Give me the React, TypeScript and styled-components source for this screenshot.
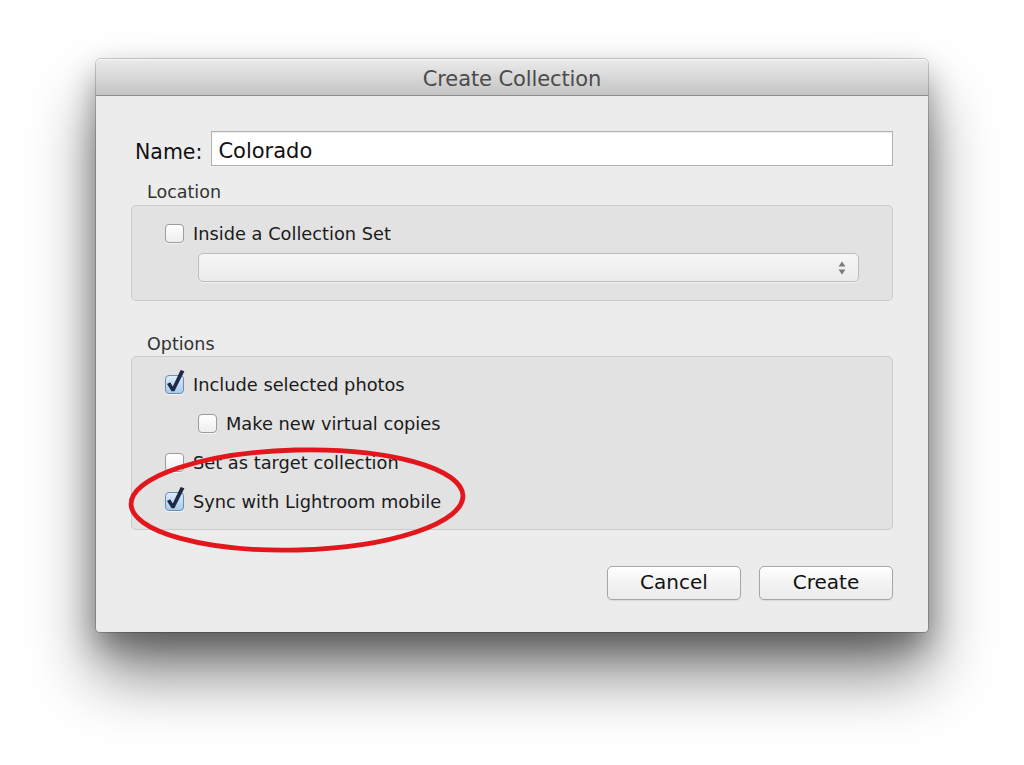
import React from "react";
import styled, { createGlobalStyle, css } from "styled-components";

const GlobalStyle = createGlobalStyle`
  html, body {
    margin: 0;
    padding: 0;
    background: #ffffff;
  }
  body {
    font-family: "DejaVu Sans", "Liberation Sans", sans-serif;
    color: #1a1a1a;
  }
`;

const Page = styled.div`
  width: 1024px;
  height: 765px;
  box-sizing: border-box;
  padding: 59px 0 0 96px;
  background: #ffffff;
  overflow: hidden;
`;

const Dialog = styled.div`
  position: relative;
  width: 832px;
  background: #ececec;
  border-radius: 5px 5px 4px 4px;
  box-shadow: 0 0 0 1px rgba(0, 0, 0, 0.18), 0 14px 30px rgba(0, 0, 0, 0.32),
    0 42px 64px rgba(0, 0, 0, 0.5);
`;

const TitleBar = styled.div`
  height: 37px;
  box-sizing: border-box;
  padding-top: 3px;
  display: flex;
  align-items: center;
  justify-content: center;
  border-radius: 5px 5px 0 0;
  border-bottom: 1px solid #8e8e8e;
  background: linear-gradient(#ebebeb, #d6d6d6 55%, #c4c4c4);
  box-shadow: inset 0 1px 0 #f7f7f7;
  font-size: 21px;
  color: #4b4b4b;
  letter-spacing: -0.1px;
`;

const Body = styled.div`
  padding: 35px 35px 32px 35px;
  display: flex;
  flex-direction: column;
`;

const NameRow = styled.label`
  display: flex;
  align-items: center;
  gap: 9px;
  padding-left: 4px;
  height: 35px;
  font-size: 20.5px;
  color: #111;
`;

const NameLabel = styled.span`
  padding-top: 6px;
`;

const TextField = styled.input`
  flex: 1;
  height: 35px;
  box-sizing: border-box;
  border: 1px solid #b2b2b2;
  box-shadow: inset 0 1px 1px rgba(0, 0, 0, 0.08);
  background: #ffffff;
  padding: 5px 6px 0;
  font-family: inherit;
  font-size: 21px;
  color: #111;
  outline: none;
`;

const SectionLabel = styled.div<{ $top: number; $bottom: number }>`
  margin: ${(p) => p.$top}px 0 ${(p) => p.$bottom}px 16px;
  height: 22px;
  line-height: 22px;
  font-size: 17.5px;
  color: #333;
`;

const Group = styled.div`
  background: #e2e2e2;
  border: 1px solid #cbcbcb;
  border-radius: 5px;
  padding: 18px 33px;
  display: flex;
  flex-direction: column;
  gap: 20px;
`;

const LocationGroup = styled(Group)`
  gap: 10px;
`;

const Row = styled.div<{ $indent?: boolean }>`
  display: flex;
  align-items: center;
  gap: 9px;
  height: 19px;
  margin-left: ${(p) => (p.$indent ? 33 : 0)}px;
  font-size: 17.8px;
  color: #1a1a1a;
  white-space: nowrap;
`;

const Box = styled.span<{ $checked?: boolean }>`
  position: relative;
  flex: none;
  width: 19px;
  height: 19px;
  box-sizing: border-box;
  border-radius: 4px;
  border: 1px solid #9c9c9c;
  background: linear-gradient(#ffffff, #eeeeee);
  box-shadow: 0 1px 0 rgba(255, 255, 255, 0.6);
  ${(p) =>
    p.$checked &&
    css`
      border-color: #6d8db0;
      background: linear-gradient(#dcebfa, #a7cbee);
    `}
  & > svg {
    position: absolute;
    left: -1px;
    top: -1px;
    overflow: visible;
  }
`;

const Select = styled.div`
  position: relative;
  margin-left: 33px;
  height: 29px;
  box-sizing: border-box;
  border: 1px solid #bdbdbd;
  border-radius: 5px;
  background: linear-gradient(#f6f6f6, #ebebeb);
  box-shadow: 0 1px 0 rgba(255, 255, 255, 0.5);
  display: flex;
  align-items: center;
  justify-content: flex-end;
  padding-right: 10px;
`;

const Footer = styled.div`
  margin-top: 36px;
  display: flex;
  justify-content: flex-end;
  gap: 18px;
`;

const Button = styled.button`
  width: 134px;
  height: 34px;
  box-sizing: border-box;
  border: 1px solid #a6a6a6;
  border-radius: 5px;
  background: linear-gradient(#ffffff, #f3f3f3 50%, #ececec);
  box-shadow: 0 1px 1px rgba(0, 0, 0, 0.08);
  font-family: inherit;
  font-size: 20px;
  color: #111;
  padding: 0 0 2px;
`;

const Annotation = styled.svg`
  position: absolute;
  left: 30px;
  top: 384px;
  pointer-events: none;
`;

const Check = () => (
  <svg width="19" height="19" viewBox="0 0 19 19">
    <path
      d="M2 9 L5.2 7.2 L7.8 11.6 L15.6 -5 L19.4 -3.8 L9.4 16.2 L6.6 16.2 Z"
      fill="#1c2a46"
    />
  </svg>
);

const CheckBox: React.FC<{ checked?: boolean; label: string; indent?: boolean }> = ({
  checked,
  label,
  indent,
}) => (
  <Row $indent={indent}>
    <Box $checked={checked}>{checked && <Check />}</Box>
    <span>{label}</span>
  </Row>
);

const Stepper = () => (
  <svg width="12" height="16" viewBox="0 0 12 16">
    <path d="M6 1.5 L9.5 6.5 L2.5 6.5 Z" fill="#7a7a7a" />
    <path d="M6 14.5 L9.5 9.5 L2.5 9.5 Z" fill="#7a7a7a" />
  </svg>
);

export default function App() {
  return (
    <Page>
      <GlobalStyle />
      <Dialog>
        <TitleBar>Create Collection</TitleBar>
        <Body>
          <NameRow>
            <NameLabel>Name:</NameLabel>
            <TextField defaultValue="Colorado" />
          </NameRow>

          <SectionLabel $top={15} $bottom={2}>
            Location
          </SectionLabel>
          <LocationGroup>
            <CheckBox label="Inside a Collection Set" />
            <Select>
              <Stepper />
            </Select>
          </LocationGroup>

          <SectionLabel $top={32} $bottom={1}>
            Options
          </SectionLabel>
          <Group>
            <CheckBox checked label="Include selected photos" />
            <CheckBox indent label="Make new virtual copies" />
            <CheckBox label="Set as target collection" />
            <CheckBox checked label="Sync with Lightroom mobile" />
          </Group>

          <Footer>
            <Button>Cancel</Button>
            <Button>Create</Button>
          </Footer>
        </Body>

        <Annotation width="345" height="115" viewBox="0 0 345 115">
          <ellipse
            cx="171"
            cy="57"
            rx="166"
            ry="50"
            fill="none"
            stroke="#e2161c"
            strokeWidth="4.8"
            transform="rotate(-1.5 171 57)"
          />
        </Annotation>
      </Dialog>
    </Page>
  );
}
